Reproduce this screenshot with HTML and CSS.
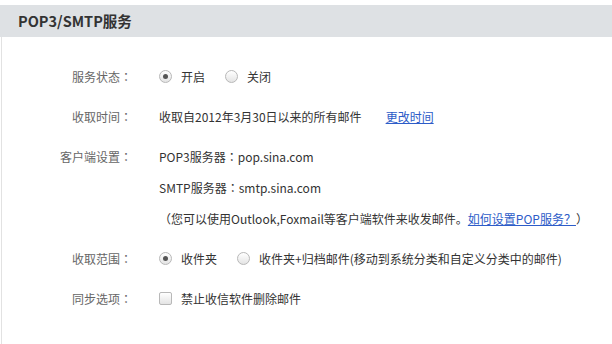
FILE: index.html
```html
<!DOCTYPE html>
<html lang="zh-CN">
<head>
<meta charset="utf-8">
<title>POP3/SMTP服务</title>
<link rel="stylesheet" href="styles.css">
</head>
<body>
<div class="panel">
  <div class="panel-head">POP3/SMTP服务</div>
  <div class="panel-body">
    <div class="form">
      <div class="label">服务状态<span class="colon" lang="zh-TW">：</span></div>
      <div class="value">
        <span class="opt"><span class="radio checked"></span>开启</span>
        <span class="opt"><span class="radio"></span>关闭</span>
      </div>

      <div class="label">收取时间<span class="colon" lang="zh-TW">：</span></div>
      <div class="value">
        <span class="since">收取自2012年3月30日以来的所有邮件</span><a class="link" href="#">更改时间</a>
      </div>

      <div class="label">客户端设置<span class="colon" lang="zh-TW">：</span></div>
      <div class="value stack">
        <div class="line">POP3服务器<span class="colon" lang="zh-TW">：</span>pop.sina.com</div>
        <div class="line">SMTP服务器<span class="colon" lang="zh-TW">：</span>smtp.sina.com</div>
        <div class="line">（您可以使用Outlook,Foxmail等客户端软件来收发邮件。<a class="link" href="#">如何设置POP服务？</a>）</div>
      </div>

      <div class="label">收取范围<span class="colon" lang="zh-TW">：</span></div>
      <div class="value">
        <span class="opt"><span class="radio checked"></span>收件夹</span>
        <span class="opt"><span class="radio"></span>收件夹+归档邮件(移动到系统分类和自定义分类中的邮件)</span>
      </div>

      <div class="label">同步选项<span class="colon" lang="zh-TW">：</span></div>
      <div class="value">
        <span class="opt"><span class="checkbox"></span>禁止收信软件删除邮件</span>
      </div>
    </div>
  </div>
</div>
</body>
</html>
```

FILE: styles.css
```css
html, body {
  margin: 0;
  padding: 0;
  background: #ffffff;
}

body {
  font-family: "Noto Sans CJK SC", "Noto Sans", "Liberation Sans", sans-serif;
  font-size: 12px;
  color: #333333;
  padding-top: 5px;
}

.panel {
  width: 612px;
}

.panel-head {
  height: 32px;
  line-height: 32px;
  background: #dee1e4;
  padding-left: 18px;
  font-size: 14.5px;
  font-weight: bold;
  color: #333333;
}

.panel-body {
  margin-left: 1px;
  border-left: 1px solid #e2e2e2;
  height: 320px;
  padding-top: 24px;
  box-sizing: border-box;
}

.form {
  display: grid;
  grid-template-columns: 130px 1fr;
  column-gap: 27px;
  row-gap: 9px;
  line-height: 31px;
}

.label {
  text-align: right;
  color: #666666;
}

.colon {
  font-family: "Noto Sans CJK TC", "Noto Sans CJK SC", sans-serif;
}

.value {
  display: flex;
  align-items: center;
  height: 31px;
  color: #333333;
}

.value.stack {
  display: block;
  height: auto;
}

.line {
  height: 31px;
}

.opt {
  display: inline-flex;
  align-items: center;
  margin-right: 20px;
}

.radio {
  width: 11px;
  height: 11px;
  border: 1px solid #b8b8b8;
  border-radius: 50%;
  background: linear-gradient(#ffffff, #e4e4e4);
  margin-right: 9px;
  display: inline-flex;
  align-items: center;
  justify-content: center;
  flex: none;
}

.radio.checked::after {
  content: "";
  width: 5px;
  height: 5px;
  border-radius: 50%;
  background: #555555;
}

.checkbox {
  width: 11px;
  height: 11px;
  border: 1px solid #b8b8b8;
  border-radius: 2px;
  background: linear-gradient(#ffffff, #e4e4e4);
  margin-right: 9px;
  flex: none;
}

.since {
  margin-right: 24px;
}

.link {
  color: #2d5cc8;
  text-decoration: underline;
}
```
